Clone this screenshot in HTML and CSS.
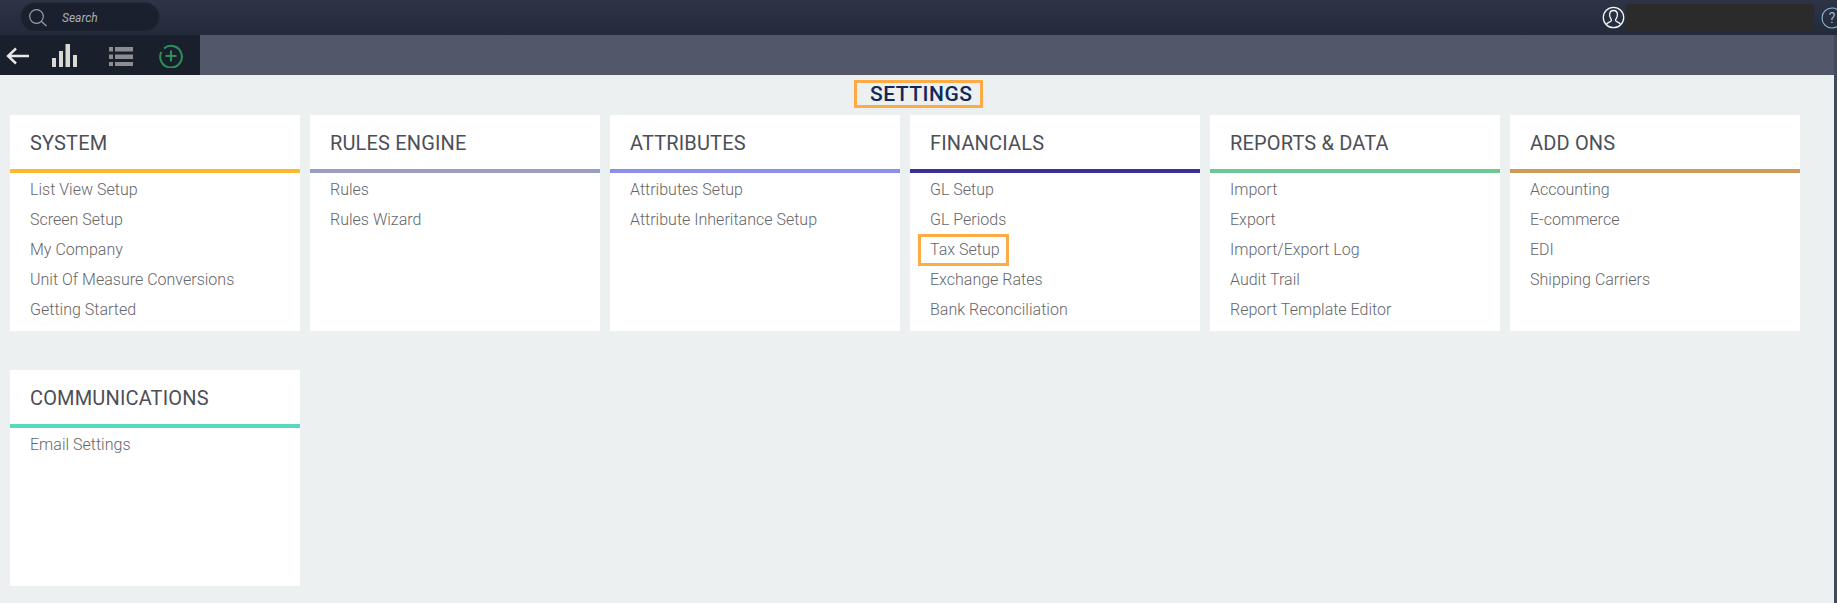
FILE: index.html
```html
<!DOCTYPE html>
<html lang="en">
<head>
<meta charset="utf-8">
<title>Settings</title>
<link rel="stylesheet" href="styles.css">
</head>
<body>
<header class="topbar">
  <div class="search">
    <svg class="search-icon" width="20" height="20" viewBox="0 0 20 20"><circle cx="8.500" cy="8.500" r="6.800"/><path d="M13.500 13.500l5 4.500"/></svg>
    <span class="search-text">Search</span>
  </div>
  <div class="user">
    <svg class="user-icon" width="23" height="23" viewBox="0 0 23 23"><circle cx="11.500" cy="11.500" r="10.200"/><path d="M4.500 18.500c.6-2.400 5-2.400 5-4.300 0-1-1.900-2.200-1.900-5.400 0-2.700 1.700-4.300 3.900-4.300s3.900 1.600 3.900 4.300c0 3.200-1.900 4.400-1.900 5.400 0 1.900 4.400 1.900 5 4.300"/></svg>
    <div class="user-name"></div>
    <svg class="help-icon" width="22" height="22" viewBox="0 0 22 22"><circle cx="11" cy="11" r="10"/><text x="11" y="16" text-anchor="middle">?</text></svg>
  </div>
</header>
<nav class="toolbar">
  <div class="tools">
    <svg class="tool-back" width="24" height="18" viewBox="0 0 24 18"><path d="M23 9H2M10 1.500L2 9l8 7.500"/></svg>
    <svg class="tool-chart" width="25" height="23" viewBox="0 0 25 23"><path d="M0 14h4v9H0zM7 7h4v16H7zM13.500 0h4.500v23h-4.500zM21 11h4v12h-4z"/></svg>
    <svg class="tool-list" width="24" height="19" viewBox="0 0 24 19"><path d="M0 0h4v4.500H0zM6 0h18v4.500H6zM0 7.500h4V12H0zM6 7.500h18V12H6zM0 15h4v4H0zM6 15h18v4H6z"/></svg>
    <svg class="tool-add" width="24" height="24" viewBox="0 0 24 24"><path d="M5 4.500A10.800 10.800 0 1 1 2.300 8M12 6.500v11M6.500 12h11"/></svg>
  </div>
</nav>
<main class="page">
  <h1 class="title"><span class="title-box">SETTINGS</span></h1>
  <div class="cards">
    <section class="card">
      <h2 class="card-title c-system">SYSTEM</h2>
      <ul class="links"><li>List View Setup</li><li>Screen Setup</li><li>My Company</li><li>Unit Of Measure Conversions</li><li>Getting Started</li></ul>
    </section>
    <section class="card">
      <h2 class="card-title c-rules">RULES ENGINE</h2>
      <ul class="links"><li>Rules</li><li>Rules Wizard</li></ul>
    </section>
    <section class="card">
      <h2 class="card-title c-attr">ATTRIBUTES</h2>
      <ul class="links"><li>Attributes Setup</li><li>Attribute Inheritance Setup</li></ul>
    </section>
    <section class="card">
      <h2 class="card-title c-fin">FINANCIALS</h2>
      <ul class="links"><li>GL Setup</li><li>GL Periods</li><li><span class="mark">Tax Setup</span></li><li>Exchange Rates</li><li>Bank Reconciliation</li></ul>
    </section>
    <section class="card">
      <h2 class="card-title c-rep">REPORTS &amp; DATA</h2>
      <ul class="links"><li>Import</li><li>Export</li><li>Import/Export Log</li><li>Audit Trail</li><li>Report Template Editor</li></ul>
    </section>
    <section class="card">
      <h2 class="card-title c-add">ADD ONS</h2>
      <ul class="links"><li>Accounting</li><li>E-commerce</li><li>EDI</li><li>Shipping Carriers</li></ul>
    </section>
    <section class="card">
      <h2 class="card-title c-com">COMMUNICATIONS</h2>
      <ul class="links"><li>Email Settings</li></ul>
    </section>
  </div>
</main>
</body>
</html>
```
FILE: styles.css
```css
* { box-sizing: border-box; }
html, body { margin: 0; padding: 0; height: 100%; overflow: hidden; }
body { background: #ecf0f1; font-family: Roboto, "Liberation Sans", sans-serif; }

.topbar {
  height: 35px;
  background: linear-gradient(180deg, #2d3446 0%, #232a3a 100%);
  display: flex;
  align-items: center;
  justify-content: space-between;
  padding-left: 20px;
}
.search {
  width: 140px;
  height: 30px;
  margin-top: -2px;
  border-radius: 15px;
  background: #1a202d;
  border: 1px solid #262c3a;
  display: flex;
  align-items: center;
  padding-left: 7px;
}
.search-icon { fill: none; stroke: #9aa0a8; stroke-width: 1.2; margin-top: 2px; }
.search-text { margin: 2px 0 0 14px; font-size: 12px; font-style: italic; color: #a8adb5; }

.user { display: flex; align-items: center; margin-right: -6px; }
.user-icon { fill: none; stroke: #f4f5f6; stroke-width: 1.300; margin-right: 1px; }
.user-name { width: 188px; height: 27px; background: #2b2b2b; margin-right: 7px; }
.help-icon { fill: none; stroke: #8fb8d8; stroke-width: 1.100; }
.help-icon text { fill: #8fb8d8; stroke: none; font-size: 14px; font-family: Roboto, sans-serif; }

.toolbar { height: 40px; background: #525769; border-right: 3px solid #434a5c; }
.tools {
  width: 200px;
  height: 40px;
  background: #19202c;
  display: flex;
  align-items: center;
  padding: 2px 0 0 6px;
}
.tool-back { fill: none; stroke: #e8e8e8; stroke-width: 2.400; margin-right: 22px; }
.tool-chart { fill: #d9d9d6; margin-right: 32px; margin-top: -1px; }
.tool-list { fill: #8b8d90; margin-right: 26px; }
.tool-add { fill: none; stroke: #2f8f5b; stroke-width: 2; margin-top: -1px; }

.page { height: 528px; border-right: 3px solid #434a5c; padding: 0 0 0 10px; }
.title { margin: 0; height: 40px; display: flex; justify-content: center; padding-top: 5px; padding-right: 7px; font-weight: 500; font-size: 21px; line-height: 22px; }
.title-box {
  display: block;
  width: 129px;
  height: 28px;
  padding-left: 13px;
  border: 3px solid #fdab47;
  color: #10285a;
  letter-spacing: .5px;
  white-space: nowrap;
}

.cards { display: grid; grid-template-columns: repeat(6, 290px); column-gap: 10px; row-gap: 39px; }
.card { height: 216px; background: #fff; }
.card-title {
  margin: 0;
  height: 58px;
  padding: 16px 0 0 20px;
  font-size: 20px;
  line-height: 24px;
  font-weight: 400;
  letter-spacing: .16px;
  color: #4d4f57;
  border-bottom: 4px solid;
}
.c-system { border-color: #fdb92a; }
.c-rules { border-color: #979dc3; }
.c-attr { border-color: #8a8fee; }
.c-fin { border-color: #383195; }
.c-rep { border-color: #6cc792; }
.c-add { border-color: #ce9a59; }
.c-com { border-color: #58d8bc; }

.links { list-style: none; margin: 2px 0 0; padding: 0 0 0 20px; }
.links li { height: 30px; line-height: 30px; font-size: 16px; font-weight: 300; letter-spacing: .01px; color: #66666a; }
.mark { display: inline-block; height: 32px; margin-top: -1px; vertical-align: top; line-height: 26px; margin-left: -12px; padding: 0 6px 0 9px; border: 3px solid #fdab47; }
```
